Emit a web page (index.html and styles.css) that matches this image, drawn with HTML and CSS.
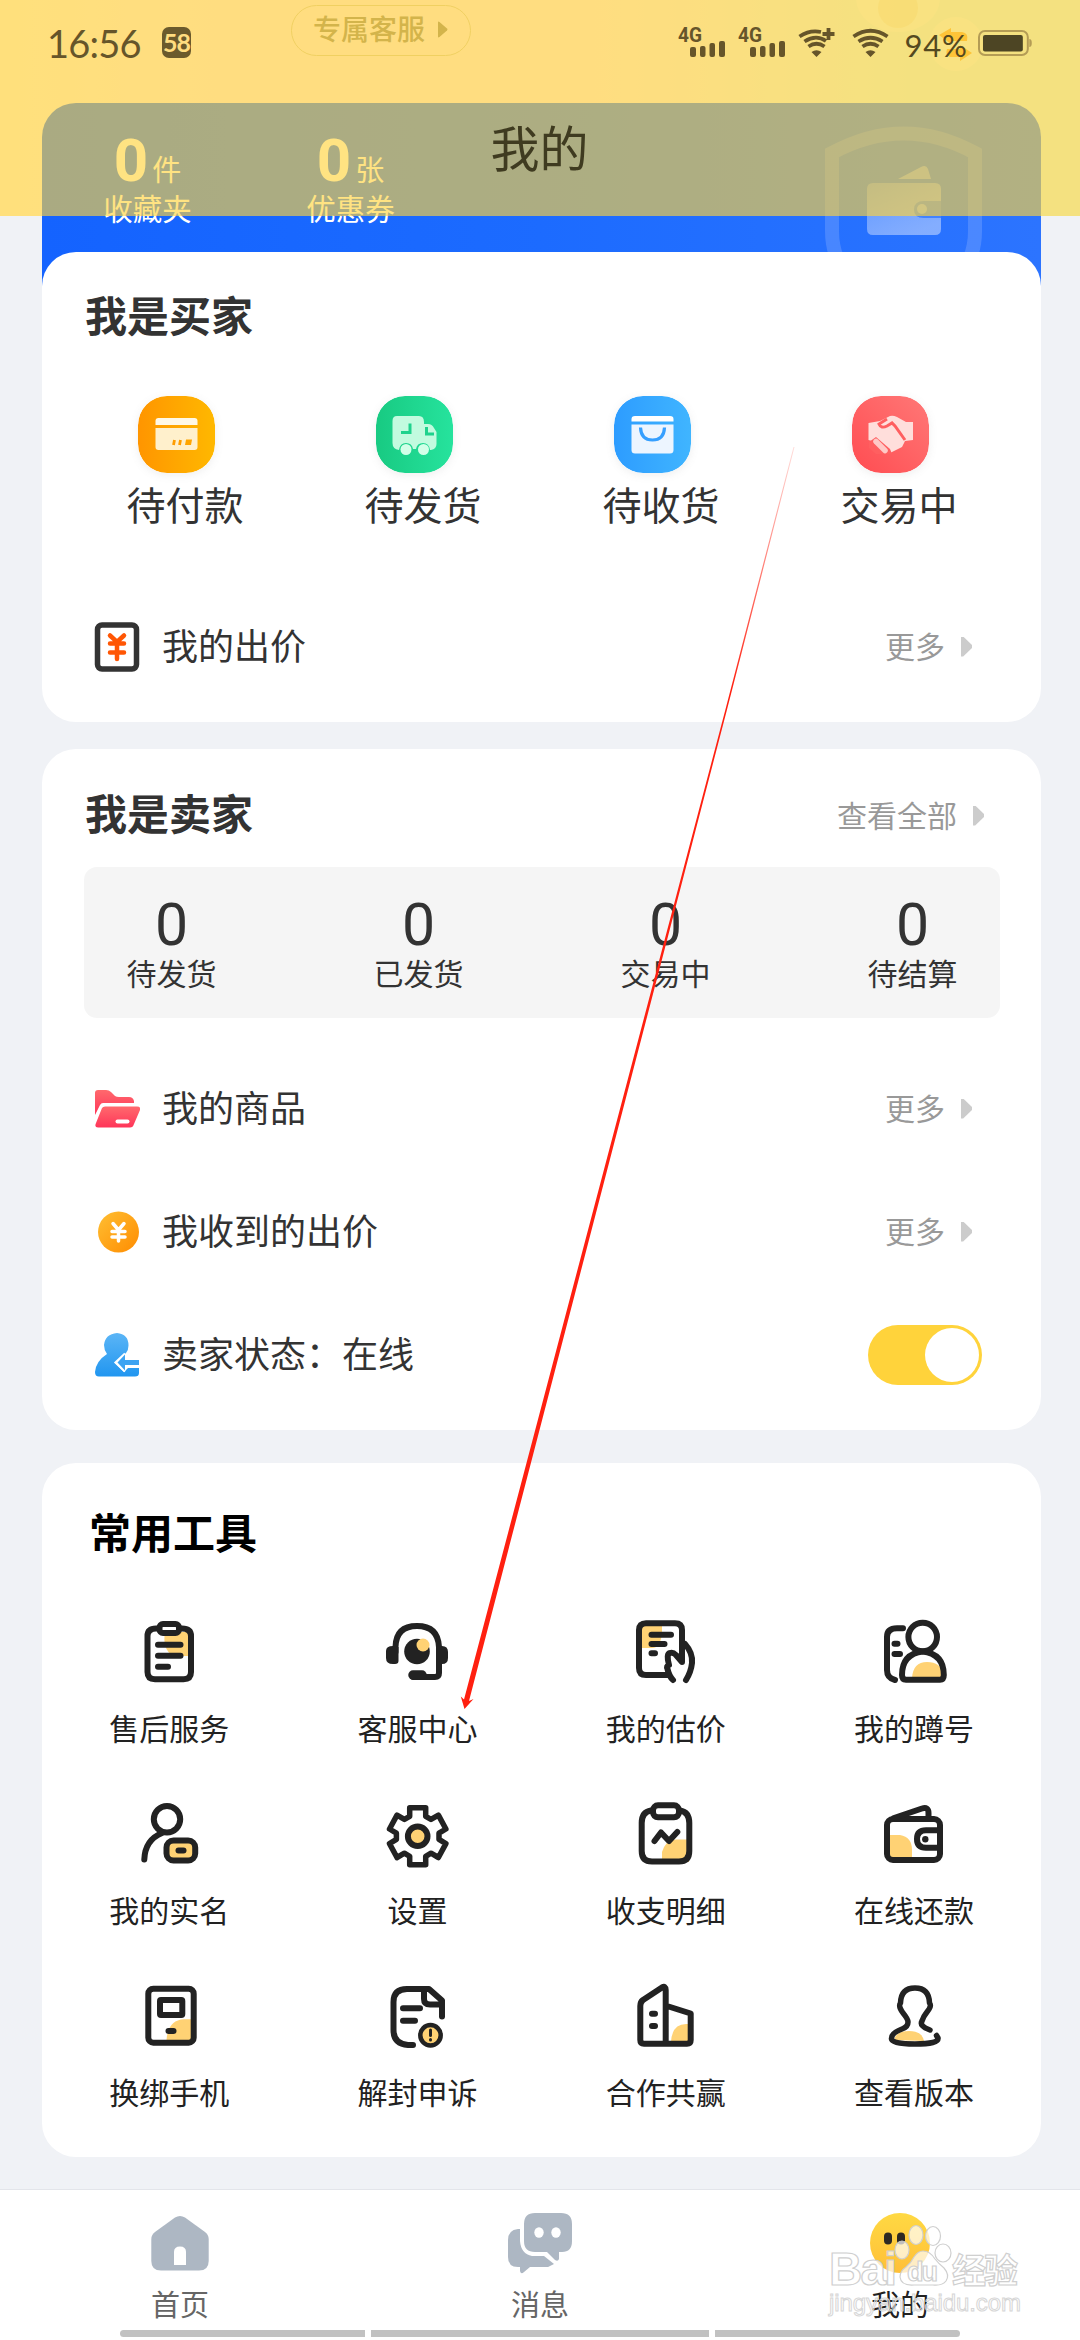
FILE: index.html
```html
<!DOCTYPE html>
<html lang="zh-CN">
<head>
<meta charset="utf-8">
<title>我的</title>
<link rel="stylesheet" href="styles.css">
</head>
<body>
<div class="page">
  <header class="hero">
    <div class="service-row">
      <div class="service-pill">专属客服<svg class="pill-arrow" width="10" height="17" viewBox="0 0 10 17"><path d="M0 1.500Q0 0 1.500 1L9 7.500Q10 8.500 9 9.500L1.500 16Q0 17 0 15.500Z"/></svg></div>
      <svg class="deco" width="140" height="80" viewBox="0 0 140 80"><ellipse cx="46" cy="-2" rx="42" ry="34" fill="#fff" opacity=".45"/><ellipse cx="46" cy="8" rx="20" ry="20" fill="#e9dcae" opacity=".4"/><circle cx="104" cy="44" r="27" fill="#fff" opacity=".45"/><path d="M87 35l12-7v4h11q7 1 5 9H99v3zM120 53l-12 8v-4H98q-5-2-3-8h13v-4z" fill="#ff9400" opacity=".8"/></svg>
    </div>
    <section class="assets">
      <div class="asset"><p class="asset-count"><b>0</b><span>件</span></p><p class="asset-name">收藏夹</p></div>
      <div class="asset"><p class="asset-count"><b>0</b><span>张</span></p><p class="asset-name">优惠券</p></div>
      <svg class="wallet-mark" width="170" height="140" viewBox="0 0 170 140">
        <defs><linearGradient id="wg" x1="0" y1="0" x2=".6" y2="1"><stop offset="0" stop-color="#fff" stop-opacity=".25"/><stop offset="1" stop-color="#d8e4ff" stop-opacity=".52"/></linearGradient></defs>
        <path d="M16 140Q7 125 7 105V27Q79-12 150 27V105Q150 125 141 140" fill="none" stroke="#b6ccff" stroke-opacity=".24" stroke-width="14"/>
        <path d="M73 53L96 41Q101 38 103 43L106 53Z" fill="#fff" opacity=".36"/>
        <path d="M48 57H110Q116 57 116 63V75H99Q89 75 89 83.500T99 92H116V103Q116 109 110 109H48Q42 109 42 103V63Q42 57 48 57Z" fill="url(#wg)"/>
        <path d="M99 75H116V92H99Q89 92 89 83.500T99 75" fill="#fff" opacity=".12"/>
        <circle cx="97" cy="83" r="5" fill="#fff" opacity=".35"/>
      </svg>
    </section>
    <div class="navbar">
      <div class="status">
        <span class="time">16:56</span><span class="badge">58</span>
        <svg class="signals" width="212" height="32" viewBox="0 0 212 32">
          <g class="st-text"><text x="0" y="16" textLength="24" lengthAdjust="spacingAndGlyphs">4G</text><text x="60" y="16" textLength="24" lengthAdjust="spacingAndGlyphs">4G</text></g>
          <g class="st-fill"><rect x="12" y="21" width="6" height="10" rx="2"/><rect x="22" y="20" width="5.500" height="11" rx="2"/><rect x="31.500" y="17" width="5.500" height="14" rx="2"/><rect x="41" y="15" width="6" height="16" rx="2"/><rect x="72" y="21" width="6" height="10" rx="2"/><rect x="82" y="20" width="5.500" height="11" rx="2"/><rect x="91.500" y="17" width="5.500" height="14" rx="2"/><rect x="101" y="15" width="6" height="16" rx="2"/>
          <path d="M133.500 26Q138.500 22.500 143.500 26L138.500 31ZM187.500 26Q192.500 22.500 197.500 26L192.500 31Z"/></g>
          <g class="st-line"><path d="M121.500 10.500Q132 3.500 143 6M126.500 15.500Q138 8 148 15M130.500 20.500Q138.500 15 146.500 20.500M150.500 2V14M144.500 8H156.500"/><path d="M175.500 10.500Q192.500-1 209.500 10.500M180.500 15.500Q192.500 8 204.500 15.500M184.500 20.500Q192.500 15 200.500 20.500"/></g>
        </svg>
        <span class="percent">94%</span>
        <svg class="battery" width="54" height="26" viewBox="0 0 54 26"><rect x="1" y="1" width="49" height="24" rx="6" fill="none" stroke="#b49c55" stroke-width="2"/><rect x="5" y="5" width="40" height="16.500" rx="2" fill="#4d4524"/><path d="M51.500 9Q54 9 54 13T51.500 17Z" fill="#b49c55"/></svg>
      </div>
      <h1 class="title">我的</h1>
    </div>
  </header>

  <main class="cards">
    <section class="card buyer">
      <h2 class="card-title">我是买家</h2>
      <div class="orders">
        <a class="order"><svg class="order-icon" viewBox="0 0 77 77" width="77" height="77"><defs><linearGradient id="go"><stop stop-color="#ff9500"/><stop offset="1" stop-color="#ffb800"/></linearGradient></defs><rect width="77" height="77" rx="29" fill="url(#go)"/><path d="M17.500 29V25Q17.500 22 20.500 22H56.500Q59.500 22 59.500 25V29Z" fill="#fff8e6"/><path d="M17.500 32H59.500V51Q59.500 54 56.500 54H20.500Q17.500 54 17.500 51Z" fill="#fff0cc"/><path d="M36.500 44L35.500 49M42.500 44L41.500 49" stroke="#ff9d00" stroke-width="2.800"/><path d="M48 43.500h6l-1 5.500h-6z" fill="#ffa500"/></svg><span>待付款</span></a>
        <a class="order"><svg class="order-icon" viewBox="0 0 77 77" width="77" height="77"><defs><linearGradient id="gg"><stop stop-color="#18ca82"/><stop offset="1" stop-color="#26e39d"/></linearGradient></defs><rect width="77" height="77" rx="29" fill="url(#gg)"/><path d="M21 20H43Q48 20 48 26V28H52Q56 28 58 32L60.500 36V48Q60.500 53 55 54H54Q53 47 47 47T40 53H37Q36 47 30 47T23 54Q16.500 53 16.500 47V25Q16.500 20 21 20Z" fill="#c2fbdf"/><path d="M25 36.500H34V27.500M50.500 31V38H58" fill="none" stroke="#1fd28d" stroke-width="3"/><circle cx="30" cy="53.500" r="5.500" fill="#d2ffe8"/><circle cx="47.500" cy="53.500" r="5.500" fill="#d2ffe8"/></svg><span>待发货</span></a>
        <a class="order"><svg class="order-icon" viewBox="0 0 77 77" width="77" height="77"><defs><linearGradient id="gb"><stop stop-color="#2d9cff"/><stop offset="1" stop-color="#40b5ff"/></linearGradient></defs><rect width="77" height="77" rx="29" fill="url(#gb)"/><path d="M17.500 25.500V23Q17.500 20 21 20H56Q59.500 20 59.500 23V25.500Z" fill="#fff"/><path d="M17.500 28.500H59.500V54Q59.500 57.500 56 57.500H21Q17.500 57.500 17.500 54Z" fill="#edf5ff"/><path d="M26.500 31.500Q27 44 38.500 44T50.500 31.500" fill="none" stroke="#369fff" stroke-width="3.200"/></svg><span>待收货</span></a>
        <a class="order"><svg class="order-icon" viewBox="0 0 77 77" width="77" height="77"><defs><linearGradient id="gr" x1="0" y1="1" x2="1" y2="0"><stop stop-color="#ff4c51"/><stop offset="1" stop-color="#ff7877"/></linearGradient></defs><rect width="77" height="77" rx="29" fill="url(#gr)"/><path d="M16.500 27L28 25L38 20Q41 19 45 21L54 26L61 26V44L53 45L50 51L38 57L26 57L20 45L16.500 44Z" fill="#ffdedb"/><path d="M35 23L27 28Q29 33 35 30L40 27L43 30L53 44" fill="none" stroke="#ff5f60" stroke-width="3"/><path d="M17 46L24 41L38 53L40 58H24L17 52Z" fill="#ff5f60"/><path d="M24 45.500L33 54.500" stroke="#ffc9c6" stroke-width="5.500" stroke-linecap="round"/></svg><span>交易中</span></a>
      </div>
      <div class="row bid"><svg class="row-icon" viewBox="0 0 46 52" width="46" height="52"><rect x="3.500" y="4" width="39" height="44" rx="4.500" fill="none" stroke="#333" stroke-width="5.500"/><path d="M16 14.500L23 21L30 14.500M16 22.500H30M16 31.500H30M23 21V38" fill="none" stroke="#ff5604" stroke-width="4.500" stroke-linecap="round"/></svg><span class="row-name">我的出价</span><span class="more">更多<i class="caret"></i></span></div>
    </section>

    <section class="card seller">
      <div class="title-row"><h2 class="card-title">我是卖家</h2><span class="more">查看全部<i class="caret"></i></span></div>
      <div class="stats">
        <div class="stat"><b>0</b><span>待发货</span></div><div class="stat"><b>0</b><span>已发货</span></div><div class="stat"><b>0</b><span>交易中</span></div><div class="stat"><b>0</b><span>待结算</span></div>
      </div>
      <div class="row"><svg class="row-icon" viewBox="0 0 46 46" width="46" height="46"><defs><linearGradient id="gf" x1="0" y1="0" x2="0" y2="1"><stop stop-color="#ff696d"/><stop offset="1" stop-color="#ff3559"/></linearGradient></defs><path d="M1 29V7Q1 4 4 4H12Q15 4 17 6L21 10Q22.500 11 25 11H35Q39 11 40 15V17H9Q7 17 6 19Z" fill="url(#gf)"/><path d="M8 22Q9 20.500 11 20.500H43Q47 20.500 46 24L40 38Q39 41.500 36 41.500H4Q0 41.500 2 37Z" fill="url(#gf)"/><path d="M23.500 35.500H33.500" stroke="#fff" stroke-width="4" stroke-linecap="round"/></svg><span class="row-name">我的商品</span><span class="more">更多<i class="caret"></i></span></div>
      <div class="row"><svg class="row-icon" viewBox="0 0 46 46" width="46" height="46"><defs><linearGradient id="gc" x1="0" y1="0" x2="1" y2="1"><stop stop-color="#ffbf33"/><stop offset="1" stop-color="#ff8c00"/></linearGradient></defs><circle cx="24.500" cy="23" r="20.500" fill="url(#gc)"/><path d="M19 14.500L24.500 21L30 14.500M18 22.500H31M18 28H31M24.500 21V32" fill="none" stroke="#fff" stroke-width="3.500" stroke-linecap="round"/></svg><span class="row-name">我收到的出价</span><span class="more">更多<i class="caret"></i></span></div>
      <div class="row"><svg class="row-icon" viewBox="0 0 46 46" width="46" height="46"><defs><linearGradient id="gp" x1="0" y1="0" x2="0" y2="1"><stop stop-color="#5bb5f6"/><stop offset="1" stop-color="#2196f0"/></linearGradient></defs><path d="M23 1Q34.500 2 34.500 13.500Q34.500 18 32 21L21 31L30 40L34 36H45V41Q45 44.500 41 44.500H5Q1 44.500 1 40Q2 29 13 22Q10 18 10 13Q11 2 23 1Z" fill="url(#gp)"/><path d="M31 21.500L21.500 30.500L31 39.500M23 30.500" fill="none" stroke="#fff" stroke-width="2.200"/><path d="M31 22.500L23.500 30.500L31 38.500V33H45V28H31Z" fill="#3ca3f2"/><path d="M32 34.200H45" stroke="#fff" stroke-width="2.200"/></svg><span class="row-name">卖家状态：在线</span><span class="toggle"><i></i></span></div>
    </section>

    <section class="card tools">
      <h2 class="card-title">常用工具</h2>
      <div class="grid">
        <a class="tool"><svg class="ti" viewBox="0 0 76 76"><path class="y" d="M34 18H60V42H42Q31 35 34 18Z"/><path d="M27 14.500H25Q16.500 14.500 16.500 22V58Q16.500 65.200 24 65.200H52.500Q60 65.200 60 58V22Q60 14.500 51 14.500H49M27 41.700H49.500M27 30.700H49.500M27 52.700H37"/><rect x="28.500" y="10" width="19.500" height="9" rx="3.500" fill="#fff"/></svg><span>售后服务</span></a>
        <a class="tool"><svg class="ti" viewBox="0 0 76 76"><path d="M16.500 38V33Q17 12 38 12T60 33V59Q60 63 56 63H34"/><path d="M34 61H43" stroke-width="9.500"/><path class="k" d="M19.500 33V47Q19.500 50 16 50H14Q7 50 7 44V37Q7 32 14 32ZM57 32H63Q69 32 69 38V44Q69 50 63 50H57Z"/><circle class="k" cx="38" cy="37.500" r="12.800"/><circle class="y" cx="44" cy="31" r="6.500"/></svg><span>客服中心</span></a>
        <a class="tool"><svg class="ti" viewBox="0 0 76 76"><path class="y" d="M12 10H34V20Q32 34 24 34H12Z"/><path d="M40 61H18Q11 61 11 54V16Q11 9.200 18 9.200H47Q54 9.200 54 16V48L48 41Q45 38 42 39Q38 40 41 51Q38 52 39.500 55Q41 62 45 66M57 30Q65 39 64 49Q63 58 58 66M23.500 20.700H43M23.500 30H36.500M23.500 39.300H27"/></svg><span>我的估价</span></a>
        <a class="tool"><svg class="ti" viewBox="0 0 76 76"><path class="y" d="M36 64Q37 48 51 48T67 60V64Z"/><circle cx="46.700" cy="23" r="14.300"/><path d="M46.700 37.500Q67.800 40 67.800 61Q67.800 65.700 64 65.700H30Q26 65.700 26 61Q26 40 46.700 37.500ZM27 14.300H21Q11 14.300 11 23V56Q11 64 19 66M18.500 29.700H21.500M18.500 40H24"/></svg><span>我的蹲号</span></a>
        <a class="tool"><svg class="ti" viewBox="0 0 76 76"><circle cx="36" cy="23.300" r="13.200"/><path d="M13.300 63.500Q14 44 31 37"/><rect x="35.500" y="44.500" width="28.700" height="20" rx="7" fill="#ffd274"/><path d="M47.500 54.500H52.500"/></svg><span>我的实名</span></a>
        <a class="tool"><svg class="ti" viewBox="0 0 76 76"><path transform="translate(38.700 40.300)" stroke-width="5.500" d="M-8-28.500H8V-20L13.300-16.900L20.700-21.200L28.200-7.300L21.300-3.100V3.100L28.200 7.300L20.700 21.200L13.300 16.900L8 20V28.500H-8V20L-13.300 16.900L-20.700 21.200L-28.200 7.300L-21.300 3.100V-3.100L-28.200-7.300L-20.700-21.200L-13.300-16.900L-8-20Z"/><circle cx="38.700" cy="40.300" r="9.800" fill="#ffd274"/></svg><span>设置</span></a>
        <a class="tool"><svg class="ti" viewBox="0 0 76 76"><path class="y" d="M34 66V56Q38 43.500 48 43.500H61V66Z"/><path d="M23 14.500Q13.700 16 13.700 27V55Q13.700 65.500 24 65.500H51Q61.300 65.500 61.300 55V27Q61.300 16 52 14.500M26.500 45L33 36.500L41 45L49.300 36"/><rect x="25" y="9.300" width="26" height="12" rx="5" fill="#fff"/></svg><span>收支明细</span></a>
        <a class="tool"><svg class="ti" viewBox="0 0 76 76"><path class="y" d="M13 39H24Q36 41 36 54V63H13Z"/><rect x="11" y="23" width="53" height="41" rx="6"/><path d="M18 22L46 12.500Q52.500 10.500 52.500 17V22M64 34.300H50Q41 34.300 41 43T50 51.800H64"/><circle class="k" cx="49.300" cy="43.300" r="3.200"/></svg><span>在线还款</span></a>
        <a class="tool"><svg class="ti" viewBox="0 0 76 76"><path class="y" d="M35.500 62Q37 42 53 41.300H61V62Z"/><rect x="17.300" y="10.700" width="45.400" height="54" rx="5"/><rect x="29" y="22" width="22.300" height="15" rx="1"/><path d="M37.500 53H42.500"/></svg><span>换绑手机</span></a>
        <a class="tool"><svg class="ti" viewBox="0 0 76 76"><path d="M34 67H29Q14.500 66 14.500 52V24Q14.500 11 28 11H50L63 22.500V38.500M45 12V21Q45 26.500 51 26.500H62M24 30.300H41M24 42.700H36"/><circle cx="51.500" cy="57.300" r="10.200" fill="#ffd274" stroke-width="4.500"/><path d="M51.500 52V57.500M51.500 61.500V62" stroke-width="3"/></svg><span>解封申诉</span></a>
        <a class="tool"><svg class="ti" viewBox="0 0 76 76"><path class="y" d="M43 64Q44 46 58 46H62V64Z"/><path d="M12.300 62V28Q12.300 24 15 22L34 9.500Q37.700 7.500 37.700 12V65M39 28L62.700 35.500V62Q62.700 65.700 59 65.700H16Q12.300 65.700 12.300 62M24 35.700H27M24 48H27"/></svg><span>合作共赢</span></a>
        <a class="tool"><svg class="ti" viewBox="0 0 76 76"><path class="y" d="M18 62Q20 53 33 53T48 63Z"/><path stroke-width="5.500" d="M54 52Q43 48 46 43Q47 39 51 34Q56 28 53.500 25Q53 10 39 10T24.500 25Q22 28 27 35Q32 41 32 44Q32 49 26 51Q15 55 15.500 61Q16 66 39 66Q63 66 62 60L60.500 57.500"/></svg><span>查看版本</span></a>
      </div>
    </section>
  </main>

  <nav class="tabs">
    <a class="tab"><svg width="64" height="62" viewBox="0 0 64 62"><path d="M27 5.500Q32 2.500 37 5.500L57 20Q60.700 23 60.700 27V49Q60.700 58.500 51 58.500H13Q3.300 58.500 3.300 49V27Q3.300 23 7 20Z" fill="#adb7c3"/><path d="M26 53V40Q26 34.500 32 34.500T38 40V53Z" fill="#fff"/></svg><span>首页</span></a>
    <a class="tab"><svg width="64" height="62" viewBox="0 0 64 62"><path d="M10 17Q0 18 0 28V45Q0 55 10 55H12V59Q13 63 16 60L22 55H40L46 52L36 44H24Q13 42 12 29V17Z" fill="#adb7c3"/><path d="M27 1H53Q64 1 64 12V29Q64 40 54 40H51V47Q50 50 47 48L39 40H27Q16 40 16 29V12Q16 1 27 1Z" fill="#adb7c3"/><ellipse cx="31" cy="20.500" rx="4.700" ry="5.200" fill="#fff"/><ellipse cx="48" cy="20.500" rx="4.700" ry="5.200" fill="#fff"/></svg><span>消息</span></a>
    <a class="tab on"><svg width="64" height="62" viewBox="0 0 64 62"><defs><linearGradient id="ge" x1="0" y1="0" x2="0" y2="1"><stop stop-color="#ffd943"/><stop offset="1" stop-color="#ffbf38"/></linearGradient></defs><circle cx="32" cy="31" r="30" fill="url(#ge)"/><rect x="16" y="20.500" width="8" height="12" rx="4" fill="#2d2923"/><rect x="29" y="20.500" width="8" height="12" rx="4" fill="#2d2923"/></svg><span>我的</span></a>
  </nav>
  <div class="homebar"><i></i><i></i><i></i></div>

  <svg class="watermark" width="200" height="100" viewBox="0 0 200 100">
    <g fill="#fff" fill-opacity=".7" stroke="#cfcfcf" stroke-width="1.200">
      <text class="wm-b" x="2" y="65" textLength="68">Bai</text>
      <path d="M96 31Q103 31 108 39Q112 44 117 48Q123 55 119 61Q115 66 106 65H87Q74 66 73 57Q73 51 79 47Q84 43 87 37Q91 31 96 31Z"/>
      <ellipse cx="75" cy="30" rx="7" ry="9"/><ellipse cx="89" cy="15" rx="7" ry="9.500"/><ellipse cx="106" cy="16" rx="7.500" ry="9.500"/><ellipse cx="116" cy="33" rx="8" ry="9"/>
      <text class="wm-d" x="80" y="61" textLength="31">du</text>
      <text class="wm-c" x="125" y="63" textLength="66">经验</text>
      <text class="wm-u" x="2" y="91" textLength="192">jingyan.baidu.com</text>
    </g>
  </svg>
  <svg class="pointer" width="345" height="1270" viewBox="455 445 345 1270"><defs><linearGradient id="gl" gradientUnits="userSpaceOnUse" x1="794" y1="447" x2="733" y2="690"><stop stop-color="#ff2010" stop-opacity=".15"/><stop offset="1" stop-color="#ff2010"/></linearGradient></defs><path d="M794.500 447L726.900 710L526.500 1480L469 1701L473.500 1699L464.500 1709L460.800 1696.500L464 1699.500L522 1480L725.300 710L793.500 447Z" fill="url(#gl)"/></svg>
</div>
</body>
</html>
```
FILE: styles.css
```css
* { box-sizing: border-box; }
body, h1, h2, p { margin: 0; }
body {
  background: #f0f2f6;
  color: #333;
  font-family: "Noto Sans CJK SC", sans-serif;
}
i { font-style: normal; }
.page {
  position: relative;
  display: flex;
  flex-direction: column;
  width: 1080px;
  height: 2340px;
  overflow: hidden;
}

/* header */
.hero { position: relative; height: 252px; background: linear-gradient(90deg, #fff6ee 0, #ffeffa 20%, #ffeffa 55%, #e0fafa 85%, #e0f9fa 100%) 0 0 / 100% 216px no-repeat; }
.service-row { display: flex; justify-content: space-between; height: 103px; padding: 5px 88px 0 291px; }
.service-pill {
  display: flex; align-items: center; gap: 13px;
  width: 180px; height: 51px; padding: 0 0 5px 21px;
  border: 1px solid #d5c9a5; border-radius: 26px;
  color: #857c68; font-size: 28px; font-weight: 500;
}
.pill-arrow { fill: #857c68; margin-top: 2px; }
.deco { margin-top: -5px; }
.assets {
  display: flex;
  height: 190px; margin: 0 39px 0 42px; padding-left: 31px;
  border-radius: 34px 34px 0 0;
  background: linear-gradient(90deg, #1463ff, #1c6bff 50%, #2c74ff);
  color: #fff;
}
.asset { display: flex; flex-direction: column; align-items: center; width: 203px; padding: 30px 54px 0 0; }
.asset-count { display: flex; align-items: baseline; gap: 4px; height: 52px; line-height: 56px; font-size: 29px; }
.asset-count b { font: bold 60px/56px Roboto, sans-serif; }
.asset-name { font-size: 29.500px; line-height: 44px; white-space: nowrap; }
.wallet-mark { margin: 23px 46px 0 auto; }
.navbar {
  position: absolute; inset: 0 0 auto; height: 216px;
  display: flex; flex-direction: column; align-items: center;
  background: rgba(255, 211, 59, .64);
}
.status { display: flex; align-items: flex-start; align-self: stretch; height: 112px; padding: 26px 48px 0 47px; color: #66552a; }
.time { width: 115px; margin-top: -2px; font: 38px/38px Lato, sans-serif; letter-spacing: -.8px; }
.badge { width: 30px; height: 31px; margin-top: 1px; border-radius: 7px; background: #6b5a2c; color: #ffdd80; font: bold 25px/31px Lato, sans-serif; text-align: center; letter-spacing: -1px; }
.signals { margin-left: 487px; overflow: visible; }
.st-text { fill: #66552a; font: bold 20px Roboto, sans-serif; }
.st-fill { fill: #66552a; }
.st-line { fill: none; stroke: #66552a; stroke-width: 3.800; }
.percent { width: 67px; margin: 3px 0 0 14px; font: 31px/32px Lato, sans-serif; color: #54491f; letter-spacing: .8px; }
.battery { margin: 4px 0 0 7px; }
.title { font-size: 49px; font-weight: 400; line-height: 70px; color: #3f3b20; margin: -1px 0 0 -1px; }

/* cards */
.cards { position: relative; display: flex; flex-direction: column; padding: 0 39px 0 42px; }
.card { border-radius: 34px; background: #fff; }
.card-title { font-size: 42px; font-weight: 700; line-height: 60px; }
.buyer { height: 470px; padding-top: 32px; }
.buyer .card-title { padding-left: 43px; }
.orders { display: grid; grid-template-columns: repeat(4, 238px); padding: 52px 0 0 24px; }
.order { display: flex; flex-direction: column; align-items: center; font-size: 39px; line-height: 60px; }
.order-icon { margin-right: 18px; border-radius: 29px; box-shadow: 0 2px 8px rgba(120, 120, 120, .12); }
.order span { margin-bottom: 2px; }
.row { display: flex; align-items: center; height: 123px; padding: 0 69px 0 52px; }
.row-name { margin-left: 22px; font-size: 36px; line-height: 54px; padding-bottom: 5px; }
.more { display: flex; align-items: center; gap: 16px; margin-left: auto; padding-bottom: 4px; color: #999; font-size: 30px; line-height: 46px; }
.caret { width: 11px; height: 20px; margin-top: 4px; background: #ccc; clip-path: polygon(0 0, 20% 0, 100% 43%, 100% 57%, 20% 100%, 0 100%); }
.row-icon { flex: none; }
.bid { margin-top: 50px; }
.seller { height: 681px; margin-top: 27px; padding-top: 33px; }
.title-row { display: flex; align-items: center; padding: 0 57px 0 43px; height: 60px; }
.title-row .more { padding: 3px 0 0; }
.stats { display: grid; grid-template-columns: repeat(4, 247px); justify-content: center; height: 151px; margin: 25px 41px 29px 42px; border-radius: 13px; background: #f5f5f5; overflow: hidden; }
.stat { display: flex; flex-direction: column; align-items: center; padding-top: 32px; font-size: 30px; line-height: 44px; }
.stat b { font: 400 59px/51px Roboto, sans-serif; }
.toggle { display: flex; justify-content: flex-end; width: 114px; height: 60px; margin-left: auto; margin-right: -10px; padding: 3px; border-radius: 30px; background: #ffd33b; }
.toggle i { width: 54px; height: 54px; border-radius: 50%; background: #fff; }
.tools { height: 694px; margin-top: 33px; padding-top: 38px; }
.tools .card-title { padding-left: 47px; color: #000; }
.grid { display: grid; grid-template-columns: repeat(4, 248.300px); grid-auto-rows: 182px; margin: 53px 0 0 3px; }
.tool { display: flex; flex-direction: column; align-items: center; font-size: 30px; line-height: 44px; color: #222; }
.tool span { margin-top: 15px; }
.ti { width: 76px; height: 76px; fill: none; stroke: #222; stroke-width: 6; stroke-linecap: round; stroke-linejoin: round; }
.ti .y { fill: #ffd274; stroke: none; }
.ti .k { fill: #222; stroke: none; }

/* bottom tabs */
.tabs { display: grid; grid-template-columns: repeat(3, 360px); height: 141px; margin-top: 32px; border-top: 1px solid #e3e5ea; background: #fff; }
.tab { display: flex; flex-direction: column; align-items: center; padding-top: 22px; font-size: 29px; line-height: 42px; color: #666; }
.tab span { margin-top: 8px; }
.tab.on { color: #222; }
.homebar { display: flex; gap: 6px; height: 10px; padding: 0 120px 3px; background: #fff; }
.homebar i { background: #c1c1c1; }
.homebar i:nth-child(1) { width: 245px; border-radius: 4px 0 0 4px; }
.homebar i:nth-child(2) { width: 338px; }
.homebar i:nth-child(3) { width: 245px; border-radius: 0 4px 4px 0; }

/* overlays */
.watermark { position: absolute; left: 827px; top: 2220px; }
.wm-b { font: bold 46px "Liberation Sans", sans-serif; }
.wm-d { font: bold 27px "Liberation Sans", sans-serif; }
.wm-c { font: bold 34px "Noto Sans CJK SC", sans-serif; }
.wm-u { font: 24px "Liberation Sans", sans-serif; fill-opacity: .35; stroke: #d6d6d6; stroke-width: 1; }
.pointer { position: absolute; left: 455px; top: 445px; }
```
